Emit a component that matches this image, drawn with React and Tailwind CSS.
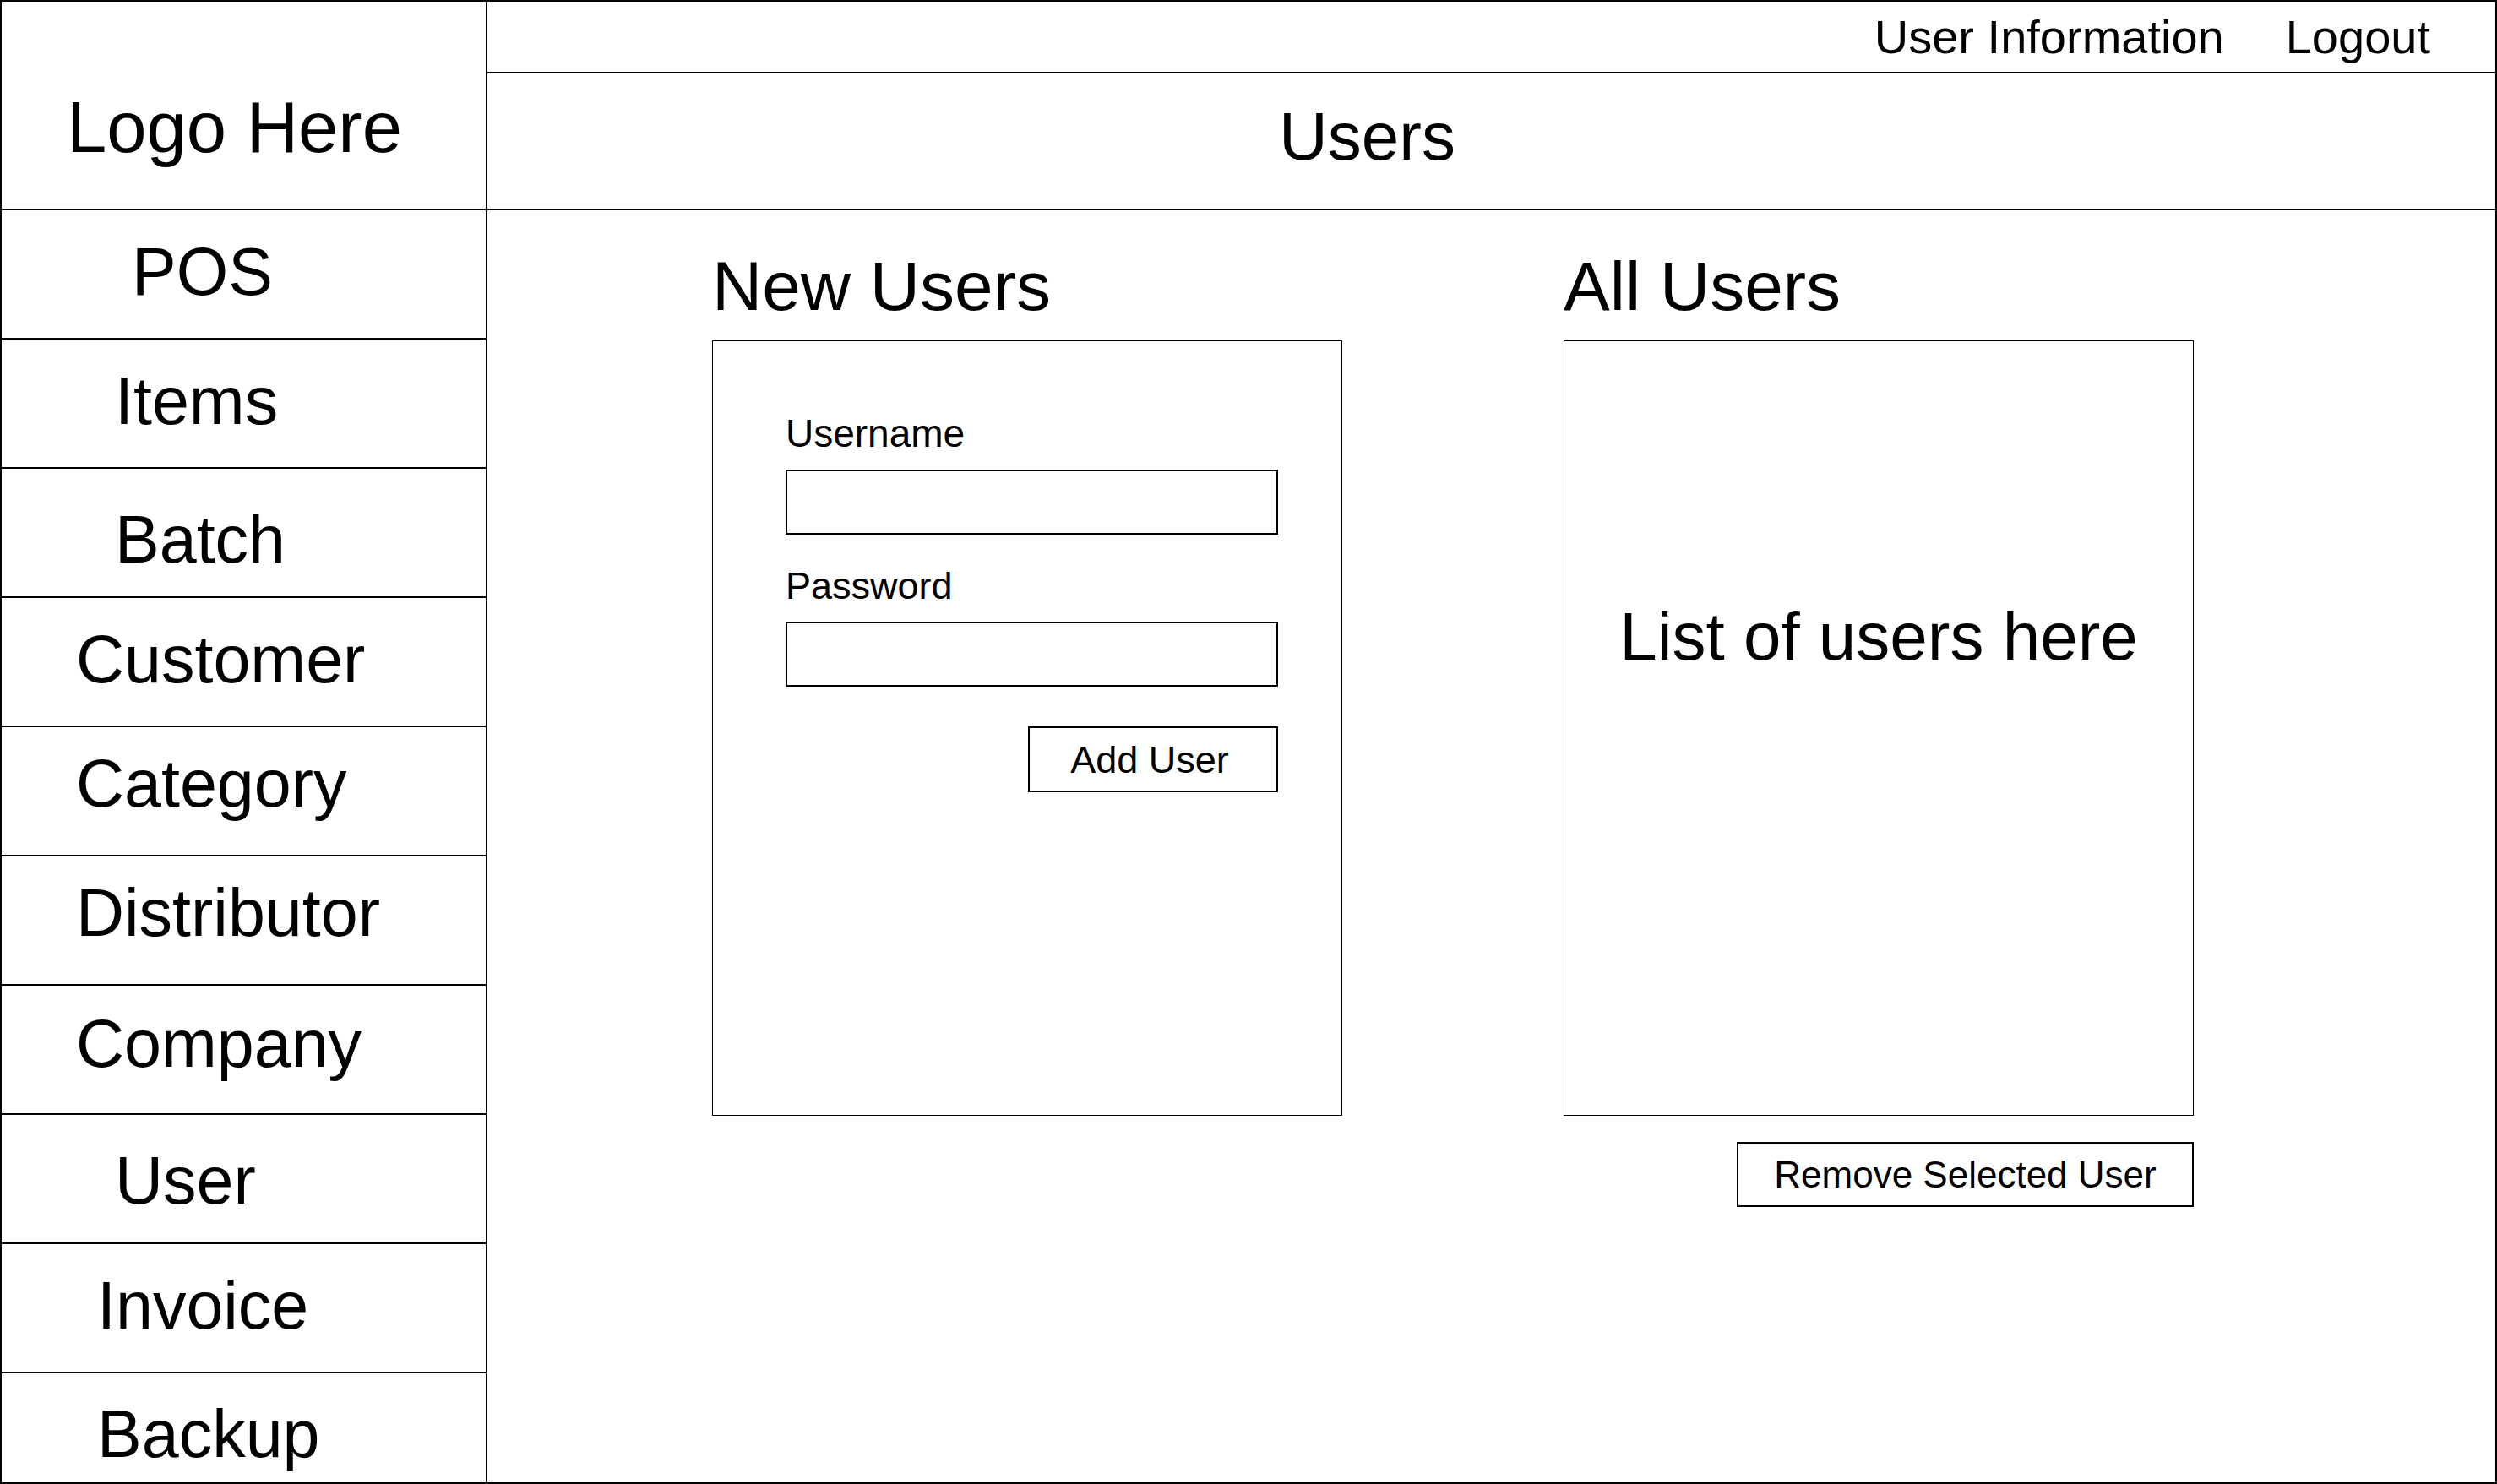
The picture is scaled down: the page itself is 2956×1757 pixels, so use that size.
export default function App() {
  const items = [
    { label: "POS", cls: "pl-[154px] pb-[6px]" },
    { label: "Items", cls: "pl-[134px] pb-[6px]" },
    { label: "Batch", cls: "pl-[134px] pt-[16px]" },
    { label: "Customer", cls: "pl-[88px] pb-[6px]" },
    { label: "Category", cls: "pl-[88px] pb-[18px]" },
    { label: "Distributor", cls: "pl-[88px] pb-[18px]" },
    { label: "Company", cls: "pl-[88px] pb-[14px]" },
    { label: "User", cls: "pl-[134px] pt-[4px]" },
    { label: "Invoice", cls: "pl-[113px] pb-[6px]" },
  ];
  return (
    <div className="w-[2956px] h-[1757px] flex border-2 border-black bg-white text-black font-['Liberation_Sans',Arial,sans-serif] overflow-hidden">
      <div className="w-[575px] shrink-0 flex flex-col border-r-2 border-black">
        <div className="h-[247px] shrink-0 border-b-2 border-black pl-[77px] pt-[106px] text-[85px] leading-none">
          Logo Here
        </div>
        {items.map((it) => (
          <div
            key={it.label}
            className={`h-[153px] shrink-0 border-b-2 border-black flex items-center text-[79px] leading-none ${it.cls}`}
          >
            {it.label}
          </div>
        ))}
        <div className="flex-1 flex items-center pl-[113px] pt-[14px] text-[79px] leading-none">
          Backup
        </div>
      </div>
      <div className="flex-1 flex flex-col">
        <div className="h-[85px] shrink-0 border-b-2 border-black flex items-center justify-end pr-[77px] gap-[73px] text-[56px] leading-none">
          <span>User Information</span>
          <span>Logout</span>
        </div>
        <div className="h-[162px] shrink-0 border-b-2 border-black pl-[937px] pt-[35px] text-[80px] leading-none">
          Users
        </div>
        <div className="flex-1 flex pl-[266px] pt-[49px] gap-[262px]">
          <div className="w-[746px] flex flex-col">
            <h2 className="text-[82px] leading-none">New Users</h2>
            <div className="mt-[23px] h-[918px] border-[1.5px] border-black pl-[86px] pr-[75px] pt-[86px] flex flex-col">
              <label className="text-[46px] leading-none">Username</label>
              <div className="mt-[20px] h-[77px] w-full border-2 border-black" />
              <label className="mt-[38px] text-[45px] leading-none">Password</label>
              <div className="mt-[20px] h-[77px] w-full border-2 border-black" />
              <button className="mt-[47px] self-end w-[296px] h-[78px] border-2 border-black text-[45px] leading-none flex items-center justify-center pr-[8px]">
                Add User
              </button>
            </div>
          </div>
          <div className="w-[746px] flex flex-col">
            <h2 className="text-[82px] leading-none">All Users</h2>
            <div className="mt-[23px] h-[918px] border-[1.5px] border-black pt-[310px] text-center text-[80px] leading-none">
              List of users here
            </div>
            <button className="mt-[31px] self-end w-[541px] h-[77px] border-2 border-black text-[44px] leading-none flex items-center justify-center">
              Remove Selected User
            </button>
          </div>
        </div>
      </div>
    </div>
  );
}
